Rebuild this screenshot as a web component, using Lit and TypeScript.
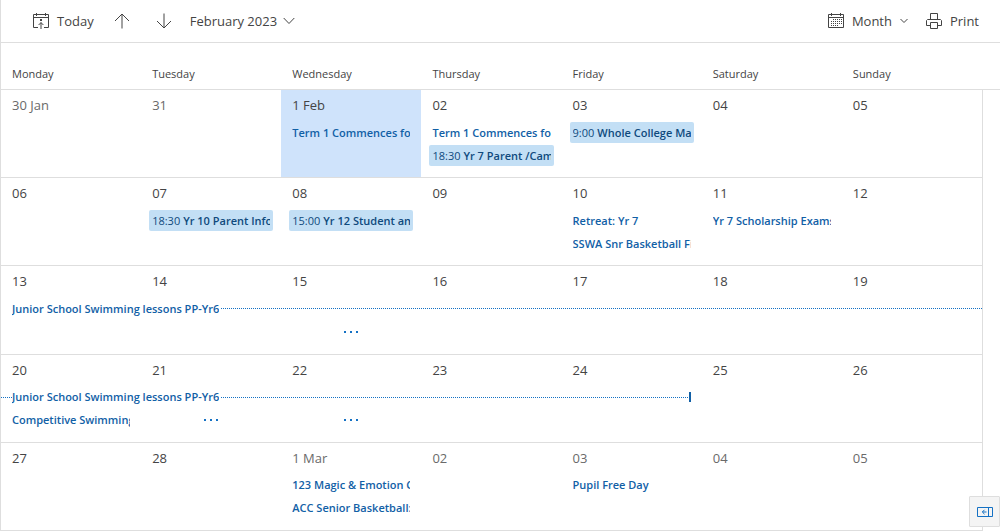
import { LitElement, html, css, svg, nothing } from "lit";
import { customElement, property } from "lit/decorators.js";

interface CalEvent {
  title: string;
  time?: string;
  days?: number;
  continuesFrom?: boolean;
  ends?: boolean;
}

interface Day {
  label: string;
  outside?: boolean;
  today?: boolean;
  events?: CalEvent[];
  more?: boolean;
  padSlots?: number;
}

const WEEKDAYS = ["Monday", "Tuesday", "Wednesday", "Thursday", "Friday", "Saturday", "Sunday"];

const WEEKS: Day[][] = [
  [
    { label: "30 Jan", outside: true },
    { label: "31", outside: true },
    { label: "1 Feb", today: true, events: [{ title: "Term 1 Commences for" }] },
    {
      label: "02",
      events: [{ title: "Term 1 Commences for" }, { time: "18:30", title: "Yr 7 Parent /Cam" }],
    },
    { label: "03", events: [{ time: "9:00", title: "Whole College Ma" }] },
    { label: "04" },
    { label: "05" },
  ],
  [
    { label: "06" },
    { label: "07", events: [{ time: "18:30", title: "Yr 10 Parent Infor" }] },
    { label: "08", events: [{ time: "15:00", title: "Yr 12 Student and" }] },
    { label: "09" },
    { label: "10", events: [{ title: "Retreat: Yr 7" }, { title: "SSWA Snr Basketball Fi" }] },
    { label: "11", events: [{ title: "Yr 7 Scholarship Exams" }] },
    { label: "12" },
  ],
  [
    { label: "13", events: [{ title: "Junior School Swimming lessons PP-Yr6", days: 7 }] },
    { label: "14" },
    { label: "15", padSlots: 1, more: true },
    { label: "16" },
    { label: "17" },
    { label: "18" },
    { label: "19" },
  ],
  [
    {
      label: "20",
      events: [
        { title: "Junior School Swimming lessons PP-Yr6", days: 5, continuesFrom: true, ends: true },
        { title: "Competitive Swimming" },
      ],
    },
    { label: "21", padSlots: 1, more: true },
    { label: "22", padSlots: 1, more: true },
    { label: "23" },
    { label: "24" },
    { label: "25" },
    { label: "26" },
  ],
  [
    { label: "27" },
    { label: "28" },
    {
      label: "1 Mar",
      outside: true,
      events: [{ title: "123 Magic & Emotion C" }, { title: "ACC Senior Basketball:" }],
    },
    { label: "02", outside: true },
    { label: "03", outside: true, events: [{ title: "Pupil Free Day" }] },
    { label: "04", outside: true },
    { label: "05", outside: true },
  ],
];

// Horizontal padding of a day cell, which multi-day events have to bridge.
const CELL_PAD = 8;

const icon = (w: number, h: number, body: unknown) =>
  html`<svg width=${w} height=${h} viewBox="0 0 ${w} ${h}" fill="none" stroke="currentColor" aria-hidden="true">${body}</svg>`;

const todayIcon = icon(16, 16, svg`
  <path d="M5 14.5H.5V1.5H15.5V14.5H11M.5 4.5H15.5M3.5 0V3M12.5 0V3"/>
  <path d="M8 16V9.5M5.6 12L8 9.6L10.4 12"/><path d="M7 6H9V8H7Z" fill="currentColor" stroke="none"/>`);
const upIcon = icon(16, 16, svg`<path d="M8 15.5V1M1 8L8 1L15 8"/>`);
const downIcon = icon(16, 16, svg`<path d="M8 .5V15M1 8L8 15L15 8"/>`);
const wideChevron = icon(12, 8, svg`<path d="M.7 1L6 6.5L11.3 1"/>`);
const smallChevron = icon(8, 6, svg`<path d="M.5 1L4 4.5L7.5 1"/>`);
const monthIcon = icon(16, 16, svg`
  <path d="M.5 1.5H15.5V14.5H.5ZM.5 4.5H15.5M3.5 0V3M12.5 0V3"/>
  <path d="M5 6.5H14M3 8.5H14M3 10.5H14M3 12.5H11" stroke-dasharray="1 1"/>`);
const printIcon = icon(16, 16, svg`
  <path d="M4.5 6.5V.5H11.5V6.5M4 12.5H.5V7.5L1.5 6.5H14.5L15.5 7.5V12.5H12M4.5 9.5H11.5V15.5H4.5Z"/>`);
const paneIcon = icon(16, 10, svg`
  <path d="M.5 .5H15.5V9.5H.5ZM11.5 .5V9.5"/><path d="M9.5 5H5.5M7.5 2.8L5.3 5L7.5 7.2"/>`);
const moreIcon = icon(14, 2, svg`
  <path d="M0 0h2v2H0zM6 0h2v2H6zM12 0h2v2h-2z" fill="currentColor" stroke="none"/>`);

const base = css`
  button {
    font: inherit;
    color: inherit;
    background: none;
    border: 0;
    padding: 0;
    margin: 0;
    cursor: pointer;
    text-align: left;
  }
  svg { display: block; flex: none; }
`;

@customElement("calendar-event")
class CalendarEvent extends LitElement {
  @property({ attribute: false }) event!: CalEvent;

  static styles = [
    base,
    css`
      :host { display: block; min-width: 0; height: 21px; color: #1160a6; }
      .event {
        display: flex;
        align-items: center;
        box-sizing: border-box;
        width: 100%;
        height: 21px;
        padding: 0 3px;
        border-radius: 2px;
      }
      .timed { background: #c3dff5; color: #0f4a7d; }
      .text { flex: 1; min-width: 0; overflow: hidden; white-space: nowrap; font-weight: 600; line-height: 20px; }
      .time { font-weight: 400; margin-right: 3px; }
      .long { padding: 0; }
      .long .text { flex: none; margin-left: 3px; }
      .from .text { margin-left: 0; }
      .lead { width: 11px; }
      .line { flex: 1; margin-left: 2px; }
      .lead, .line { border-top: 1px dotted #1471c4; }
      .end { width: 2px; height: 10px; margin-left: 1px; background: currentColor; }
    `,
  ];

  render() {
    const e = this.event;
    if (e.days) {
      return html`<button class="event long ${e.continuesFrom ? "from" : ""}">
        ${e.continuesFrom ? html`<span class="lead"></span>` : nothing}
        <span class="text">${e.title}</span>
        <span class="line"></span>
        ${e.ends ? html`<span class="end"></span>` : nothing}
      </button>`;
    }
    return html`<button class="event ${e.time ? "timed" : ""}">
      <span class="text">${e.time ? html`<span class="time">${e.time}</span>` : nothing}${e.title}</span>
    </button>`;
  }
}

@customElement("app-root")
class AppRoot extends LitElement {
  static styles = [
    base,
    css`
      :host {
        position: relative;
        display: flex;
        flex-direction: column;
        box-sizing: border-box;
        min-height: 100vh;
        border-left: 1px solid #dedede;
        background: #fff;
        color: #444;
        font-family: "Open Sans", "Noto Sans", sans-serif;
        font-size: 11px;
      }
      .toolbar {
        display: flex;
        align-items: center;
        height: 42px;
        padding: 0 21px 0 32px;
        border-bottom: 1px solid #dedede;
        font-size: 13px;
      }
      .toolbar button { display: flex; align-items: center; gap: 8px; }
      .group { display: flex; align-items: center; }
      .nav { gap: 20px; }
      .arrows { gap: 26px; }
      .period { gap: 18px; }
      .toolbar .month { gap: 6px; }
      .views { gap: 18px; margin-left: auto; }
      .body { flex: 1; display: flex; }
      .calendar { flex: 1; min-width: 0; display: flex; flex-direction: column; }
      tbody { flex: 1; display: flex; flex-direction: column; border-right: 1px solid #dedede; }
      tr { display: grid; grid-template-columns: repeat(7, minmax(0, 1fr)); }
      thead tr { border-bottom: 1px solid #dedede; padding-right: 1px; }
      tbody tr { flex: 1; border-bottom: 1px solid #dedede; }
      th {
        box-sizing: border-box;
        height: 46px;
        padding: 20px 11px 0;
        font-weight: 400;
        line-height: 22px;
        text-align: left;
      }
      td { padding: 4px 8px 0; min-width: 0; }
      .date { display: block; height: 28px; padding-left: 3px; font-size: 13px; line-height: 22px; }
      .outside .date { color: #6a6a6a; }
      .today { background: #cfe3fb; }
      .slots { display: grid; grid-template-columns: minmax(0, 1fr); grid-auto-rows: 21px; gap: 2px; }
      .more { display: flex; align-items: center; justify-content: center; color: #1471c4; }
      .gutter { width: 17px; }
      .gutter-head { height: 46px; border-bottom: 1px solid #dedede; }
      .pane {
        position: absolute;
        right: 0;
        bottom: 4px;
        display: flex;
        align-items: center;
        justify-content: center;
        box-sizing: border-box;
        width: 31px;
        height: 31px;
        border: 1px solid #dedede;
        border-radius: 1px;
        background: #f4f4f4;
        color: #1471c4;
      }
    `,
  ];

  private renderEvent(e: CalEvent) {
    if (!e.days) return html`<calendar-event .event=${e}></calendar-event>`;
    const lead = e.continuesFrom ? CELL_PAD : 0;
    const tail = e.ends ? -3 : CELL_PAD;
    const width = `calc(${e.days * 100}% + ${(e.days - 1) * CELL_PAD * 2 + lead + tail}px)`;
    return html`<calendar-event style="width:${width};margin-left:${-lead}px" .event=${e}></calendar-event>`;
  }

  private renderDay(d: Day) {
    return html`<td class="${d.today ? "today" : ""} ${d.outside ? "outside" : ""}">
      <span class="date">${d.label}</span>
      <div class="slots">
        ${Array.from({ length: d.padSlots ?? 0 }, () => html`<span></span>`)}
        ${(d.events ?? []).map((e) => this.renderEvent(e))}
        ${d.more ? html`<button class="more" aria-label="More events">${moreIcon}</button>` : nothing}
      </div>
    </td>`;
  }

  render() {
    return html`
      <header class="toolbar">
        <div class="group period">
          <div class="group nav">
            <button>${todayIcon}<span>Today</span></button>
            <div class="group arrows">
              <button aria-label="Previous month">${upIcon}</button>
              <button aria-label="Next month">${downIcon}</button>
            </div>
          </div>
          <button class="month"><span>February 2023</span>${wideChevron}</button>
        </div>
        <div class="group views">
          <button>${monthIcon}<span>Month</span>${smallChevron}</button>
          <button>${printIcon}<span>Print</span></button>
        </div>
      </header>
      <main class="body">
        <table class="calendar">
          <thead>
            <tr>${WEEKDAYS.map((w) => html`<th scope="col">${w}</th>`)}</tr>
          </thead>
          <tbody>
            ${WEEKS.map((week) => html`<tr>${week.map((d) => this.renderDay(d))}</tr>`)}
          </tbody>
        </table>
        <div class="gutter"><div class="gutter-head"></div></div>
      </main>
      <button class="pane" aria-label="Show agenda pane">${paneIcon}</button>
    `;
  }
}
